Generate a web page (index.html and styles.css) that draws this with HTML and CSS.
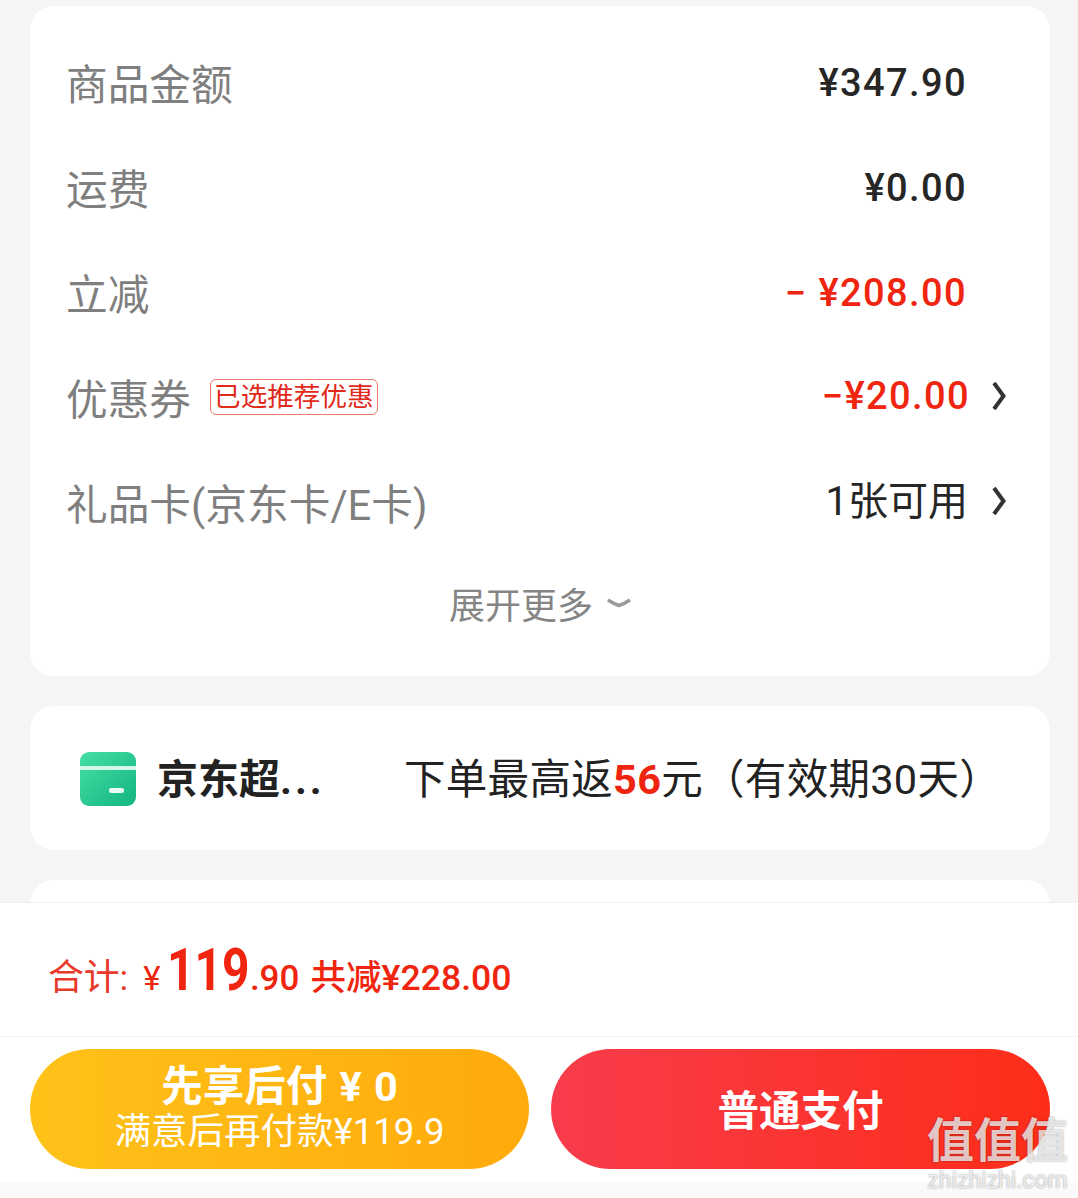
FILE: index.html
```html
<!DOCTYPE html>
<html lang="zh-CN">
<head>
    <meta charset="UTF-8">
    <meta name="viewport" content="width=device-width, initial-scale=1.0">
    <title>订单结算</title>
    <link rel="stylesheet" href="styles.css">
</head>
<body>
    <div class="page">
        <div class="scroll">
            <div class="card summary">
                <div class="row">
                    <span class="label">商品金额</span>
                    <span class="value">¥347.90</span>
                </div>
                <div class="row">
                    <span class="label">运费</span>
                    <span class="value">¥0.00</span>
                </div>
                <div class="row">
                    <span class="label">立减</span>
                    <span class="value red"><span class="minus">−</span>¥208.00</span>
                </div>
                <div class="row">
                    <span class="label">优惠券</span>
                    <span class="tag">已选推荐优惠</span>
                    <span class="value red has-arrow">−¥20.00</span>
                    <svg class="arrow" viewBox="0 0 14 30"><path d="M2 2 L11.5 15 L2 28" /></svg>
                </div>
                <div class="row">
                    <span class="label">礼品卡(京东卡/E卡)</span>
                    <span class="value plain has-arrow">1张可用</span>
                    <svg class="arrow" viewBox="0 0 14 30"><path d="M2 2 L11.5 15 L2 28" /></svg>
                </div>
                <div class="more">
                    <span>展开更多</span>
                    <svg class="more-icon" viewBox="0 0 26 12"><path d="M2 3 Q8 7 13 8.5 Q18 7 24 3" /></svg>
                </div>
            </div>

            <div class="card promo">
                <svg class="promo-icon" viewBox="0 0 56 54">
                    <defs>
                        <linearGradient id="wallet" x1="0" y1="0" x2="1" y2="1">
                            <stop offset="0" stop-color="#45dfa6" />
                            <stop offset="1" stop-color="#13b57f" />
                        </linearGradient>
                    </defs>
                    <rect width="56" height="54" rx="9" fill="url(#wallet)" />
                    <rect y="14" width="56" height="4" fill="#d6f8ea" />
                    <rect x="29" y="36" width="15" height="5" rx="2" fill="#e6fbf2" />
                </svg>
                <span class="promo-name">京东超<span class="dots">...</span></span>
                <span class="promo-text">下单最高返<b>56</b>元（有效期30天）</span>
            </div>

            <div class="card next"></div>
        </div>

        <div class="footer">
            <div class="total">
                <span class="total-label">合计:</span>
                <span class="yen">¥</span><span class="big">119</span><span class="cents">.90</span>
                <span class="saved">共减¥228.00</span>
            </div>
            <div class="buttons">
                <div class="btn btn-later">
                    <span class="btn-title">先享后付 ¥ 0</span>
                    <span class="btn-sub">满意后再付款¥119.9</span>
                </div>
                <div class="btn btn-pay">
                    <span class="btn-main">普通支付</span>
                </div>
            </div>
        </div>
        <div class="strip"></div>
        <div class="watermark">
            <span class="wm-logo">值值值</span>
            <span class="wm-url">zhizhizhi.com</span>
        </div>
    </div>
</body>
</html>
```

FILE: styles.css
```css
* {
    box-sizing: border-box;
}
body {
    margin: 0;
    background: #f5f5f5;
    font-family: Roboto, "Noto Sans CJK SC", sans-serif;
}
.page {
    position: relative;
    width: 1078px;
    height: 1198px;
    overflow: hidden;
    display: flex;
    flex-direction: column;
}
.scroll {
    height: 902px;
    overflow: hidden;
    padding: 6px 28px 0 30px;
    display: flex;
    flex-direction: column;
    gap: 30px;
    flex-shrink: 0;
}
.card {
    background: #fff;
    border-radius: 24px;
    flex-shrink: 0;
}
.summary {
    height: 670px;
    padding: 27px 44px 0 36px;
}
.row {
    height: 105px;
    display: flex;
    align-items: center;
}
.label {
    font-size: 41.7px;
    color: #7f7f7f;
    margin-top: -8px;
}
.value {
    margin-left: auto;
    margin-right: 39px;
    font-size: 38px;
    letter-spacing: 1.4px;
    font-weight: 500;
    color: #262626;
    margin-top: -6px;
}
.value.red {
    color: #f0250f;
}
.minus {
    margin-right: 11px;
}
.value.has-arrow {
    margin-right: 1px;
    margin-top: -10px;
}
.value.plain {
    margin-right: 3px;
    font-weight: 400;
    font-size: 40px;
    letter-spacing: 0;
    margin-top: -15px;
}
.tag {
    margin-left: 19px;
    margin-top: -7px;
    height: 36px;
    padding: 0 3px;
    border: 1px solid #ee7a6c;
    border-radius: 6px;
    color: #e2291a;
    font-size: 26.6px;
    line-height: 33px;
}
.arrow {
    width: 14px;
    height: 30px;
    margin-left: 21px;
    margin-top: -10px;
    flex-shrink: 0;
    fill: none;
    stroke: #333;
    stroke-width: 4;
}
.more {
    display: flex;
    justify-content: center;
    align-items: center;
    gap: 13px;
    color: #858585;
    font-size: 36px;
    margin-top: 10px;
    margin-left: 9px;
    height: 70px;
}
.more-icon {
    width: 26px;
    height: 12px;
    fill: none;
    stroke: #999;
    stroke-width: 3.5;
}
.promo {
    height: 144px;
    display: flex;
    align-items: center;
    padding-left: 50px;
}
.promo-icon {
    width: 56px;
    height: 54px;
    margin-top: 2px;
    flex-shrink: 0;
}
.promo-name {
    width: 247px;
    margin-left: 21px;
    margin-top: -4px;
    font-size: 41px;
    font-weight: 700;
    color: #222;
}
.dots {
    letter-spacing: 3px;
}
.promo-text {
    font-size: 41.5px;
    letter-spacing: 0.3px;
    margin-top: -4px;
    color: #222;
    white-space: nowrap;
}
.promo-text b {
    color: #f0250f;
    font-weight: 700;
}
.next {
    height: 60px;
}
.footer {
    flex: none;
    height: 280px;
    background: #fff;
    border-top: 1px solid #f0f0f0;
    display: flex;
    flex-direction: column;
}
.strip {
    flex: 1;
    background: #fafafa;
}
.total {
    height: 134px;
    padding: 0 0 0 48px;
    display: flex;
    align-items: baseline;
    align-content: center;
    flex-wrap: wrap;
    border-bottom: 1px solid #f2f2f2;
    color: #f0250f;
}
.total-label {
    font-size: 35.8px;
    color: #e8392a;
}
.yen {
    font-size: 33px;
    margin-left: 15px;
    margin-right: 6px;
}
/* the digits in the shot are narrower than any installed face */
.big {
    display: inline-block;
    font-size: 60px;
    font-weight: 700;
    transform: scaleX(0.8);
    transform-origin: left;
    margin-right: -20px;
}
.cents {
    font-size: 35px;
    font-weight: 500;
}
.saved {
    font-size: 35.6px;
    margin-left: 11px;
    font-weight: 500;
}
.buttons {
    display: flex;
    gap: 22px;
    padding: 12px 28px 0 30px;
}
.btn {
    width: 499px;
    height: 120px;
    border-radius: 60px;
    color: #fff;
    display: flex;
    flex-direction: column;
    align-items: center;
    justify-content: center;
}
.btn-later {
    background: linear-gradient(90deg, #fec219, #ffaa0b);
}
.btn-pay {
    background: linear-gradient(90deg, #f83c4c, #fd2d18);
}
.btn-title {
    font-size: 41.5px;
    word-spacing: 2px;
    line-height: 46px;
    font-weight: 700;
}
.btn-sub {
    font-size: 36.5px;
    line-height: 44px;
}
.btn-main {
    font-size: 41.5px;
    font-weight: 700;
    margin-top: -2px;
}
.watermark {
    position: absolute;
    right: 10px;
    top: 1113px;
    display: flex;
    flex-direction: column;
    align-items: center;
    color: rgba(255, 255, 255, 0.75);
    text-shadow: 0 0 2px rgba(0, 0, 0, 0.45);
}
.wm-logo {
    font-size: 47px;
    line-height: 56px;
    font-weight: 700;
}
.wm-url {
    font-size: 23px;
    line-height: 24px;
}
```
